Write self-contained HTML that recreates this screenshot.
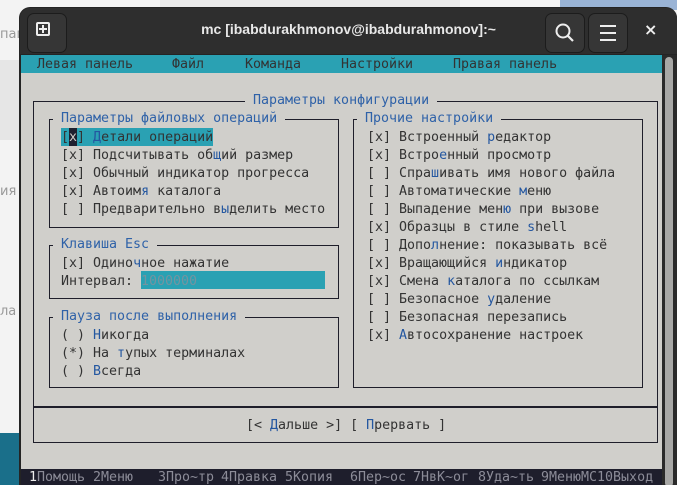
<!DOCTYPE html>
<html><head><meta charset="utf-8"><style>
*{margin:0;padding:0;box-sizing:border-box}
html,body{width:677px;height:485px;overflow:hidden}
body{background:#f3f3f3;position:relative;font-family:"DejaVu Sans Mono","Liberation Mono",monospace;}
.a{position:absolute}
.t{position:absolute;font-size:13.3px;line-height:18px;white-space:pre;color:#333;height:18px}
.h{color:#2457a0}
.box{position:absolute;border:1.5px solid #1e1e2a}
.lbl{position:absolute;font-size:13.3px;line-height:18px;white-space:pre;color:#2f62a8;background:#d0cfcb;padding:0 8px}
.btn{position:absolute;width:40px;height:40px;border-radius:7px;background:#363636;border:1px solid #1c1c1c}
.f{position:absolute;top:470px;font-size:13.3px;line-height:16px;white-space:pre;color:#8c8c98}
</style></head><body>
<div class="a" style="left:0;top:60px;width:60px;height:80px;background:#e6e6e6"></div>
<div class="a" style="left:0;top:433px;width:30px;height:52px;background:#1a6f8a"></div>
<div class="a" style="left:0;top:27px;font:13px 'DejaVu Sans',sans-serif;color:#999">пап</div>
<div class="a" style="left:0;top:184px;font:13px 'DejaVu Sans',sans-serif;color:#999">ия</div>
<div class="a" style="left:0;top:304px;font:13px 'DejaVu Sans',sans-serif;color:#999">ла</div>
<div class="a" style="left:160px;top:0;width:300px;height:7px;background:#eaeaea"></div>
<div class="a" style="left:560px;top:0;width:117px;height:10px;background:#9ab4d6"></div>
<!-- window -->
<div class="a" style="left:19px;top:7px;width:658px;height:478px;background:#242424;border-radius:11px 11px 0 0"></div>
<div class="a" style="left:20px;top:8px;width:657px;height:46px;background:#2e2e2e;border-radius:10px 10px 0 0"></div>
<div class="btn" style="left:27px;top:13px"></div>
<div class="a" style="left:36px;top:22px;width:14px;height:14px;border:2px solid #eee;border-radius:2px"></div>
<div class="a" style="left:42px;top:25px;width:2px;height:8px;background:#eee"></div>
<div class="a" style="left:39px;top:28px;width:8px;height:2px;background:#eee"></div>
<div class="a" style="left:0;width:677px;top:21px;text-align:center;font:bold 14px 'Liberation Sans',sans-serif;color:#e8e8e8;padding-left:20px">mc [ibabdurakhmonov@ibabdurahmonov]:~</div>
<div class="btn" style="left:545px;top:13px"></div>
<svg class="a" style="left:553px;top:21px" width="24" height="24"><circle cx="10" cy="10" r="6.5" stroke="#eee" stroke-width="2" fill="none"/><line x1="15" y1="15" x2="20" y2="20" stroke="#eee" stroke-width="2.2"/></svg>
<div class="btn" style="left:588px;top:13px"></div>
<svg class="a" style="left:598px;top:23px" width="20" height="20"><path d="M2 3H18M2 10H18M2 17H18" stroke="#eee" stroke-width="2"/></svg>
<div class="a" style="left:644px;top:20px;font:bold 16px 'DejaVu Sans',sans-serif;color:#eee">×</div>
<!-- terminal -->
<div class="a" style="left:21px;top:55px;width:641px;height:430px;background:#d0cfcb"></div>
<div class="a" style="left:662px;top:55px;width:15px;height:430px;background:#2a2a2a"></div>
<div class="a" style="left:665px;top:57px;width:8px;height:430px;background:#a8a8a6;border-radius:4px"></div>
<div class="a" style="left:21px;top:55px;width:641px;height:18px;background:#2aa1b3"></div>
<div class="t" style="left:37px;top:56px">Левая панель</div>
<div class="t" style="left:172px;top:56px">Файл</div>
<div class="t" style="left:245px;top:56px">Команда</div>
<div class="t" style="left:341px;top:56px">Настройки</div>
<div class="t" style="left:453px;top:56px">Правая панель</div>
<!-- outer dialog -->
<div class="box" style="left:33px;top:101px;width:625px;height:342px"></div>
<div class="a" style="left:33px;top:406px;width:625px;height:1.5px;background:#1e1e2a"></div>
<div class="lbl" style="left:245px;top:92px">Параметры конфигурации</div>
<!-- left boxes -->
<div class="box" style="left:49px;top:119px;width:290px;height:109px"></div>
<div class="lbl" style="left:53px;top:110px">Параметры файловых операций</div>
<div class="a" style="left:61px;top:128px;width:152px;height:18px;background:#2aa1b3"></div>
<div class="a" style="left:69px;top:128px;width:8px;height:18px;background:#1e2030"></div>
<div class="t" style="left:61px;top:129px">[<span style="color:#d0cfcb">x</span>] <span class="h">Д</span>етали операций</div>
<div class="t" style="left:61px;top:147px">[x] Подсчитывать об<span class="h">щ</span>ий размер</div>
<div class="t" style="left:61px;top:165px">[x] Обычный индикатор прогресса</div>
<div class="t" style="left:61px;top:183px">[x] Автоим<span class="h">я</span> каталога</div>
<div class="t" style="left:61px;top:201px">[ ] Предварительно в<span class="h">ы</span>делить место</div>
<div class="box" style="left:49px;top:245px;width:290px;height:54px"></div>
<div class="lbl" style="left:53px;top:236px">Клавиша Esc</div>
<div class="t" style="left:61px;top:255px">[x] Одино<span class="h">ч</span>ное нажатие</div>
<div class="t" style="left:61px;top:273px">Интервал: </div>
<div class="a" style="left:141px;top:271px;width:184px;height:18px;background:#2aa1b3"></div>
<div class="t" style="left:141px;top:273px;color:#7394a0">1000000</div>
<div class="box" style="left:49px;top:317px;width:290px;height:71px"></div>
<div class="lbl" style="left:53px;top:308px">Пауза после выполнения</div>
<div class="t" style="left:61px;top:327px">( ) <span class="h">Н</span>икогда</div>
<div class="t" style="left:61px;top:345px">(*) На <span class="h">т</span>упых терминалах</div>
<div class="t" style="left:61px;top:363px">( ) <span class="h">В</span>сегда</div>
<!-- right box -->
<div class="box" style="left:353px;top:119px;width:290px;height:269px"></div>
<div class="lbl" style="left:357px;top:110px">Прочие настройки</div>
<div class="t" style="left:367px;top:129px">[x] Встроенный <span class="h">р</span>едактор</div>
<div class="t" style="left:367px;top:147px">[x] Встро<span class="h">е</span>нный просмотр</div>
<div class="t" style="left:367px;top:165px">[ ] Спра<span class="h">ш</span>ивать имя нового файла</div>
<div class="t" style="left:367px;top:183px">[ ] Автоматические <span class="h">м</span>еню</div>
<div class="t" style="left:367px;top:201px">[ ] Выпадение мен<span class="h">ю</span> при вызове</div>
<div class="t" style="left:367px;top:219px">[x] Образцы в стиле <span class="h">s</span>hell</div>
<div class="t" style="left:367px;top:237px">[ ] Допо<span class="h">л</span>нение: показывать всё</div>
<div class="t" style="left:367px;top:255px">[x] Вращающийся <span class="h">и</span>ндикатор</div>
<div class="t" style="left:367px;top:273px">[x] Смена <span class="h">к</span>аталога по ссылкам</div>
<div class="t" style="left:367px;top:291px">[ ] Безопасное <span class="h">у</span>даление</div>
<div class="t" style="left:367px;top:309px">[ ] Безопасная перезапись</div>
<div class="t" style="left:367px;top:327px">[x] <span class="h">А</span>втосохранение настроек</div>
<div class="t" style="left:246px;top:417px">[&lt; <span class="h">Д</span>альше &gt;] [ <span class="h">П</span>рервать ]</div>
<!-- bottom bar -->
<div class="a" style="left:21px;top:469px;width:641px;height:16px;background:#1e1e2c"></div>
<div class="f" style="left:29px"><span style="color:#eee">1</span>Помощь</div>
<div class="f" style="left:93px">2Меню</div>
<div class="f" style="left:158px">3Про~тр</div>
<div class="f" style="left:221px">4Правка</div>
<div class="f" style="left:285px">5Копия</div>
<div class="f" style="left:350px">6Пер~ос</div>
<div class="f" style="left:413px">7НвК~ог</div>
<div class="f" style="left:478px">8Уда~ть</div>
<div class="f" style="left:541px">9МенюMC10Выход</div>
</body></html>
